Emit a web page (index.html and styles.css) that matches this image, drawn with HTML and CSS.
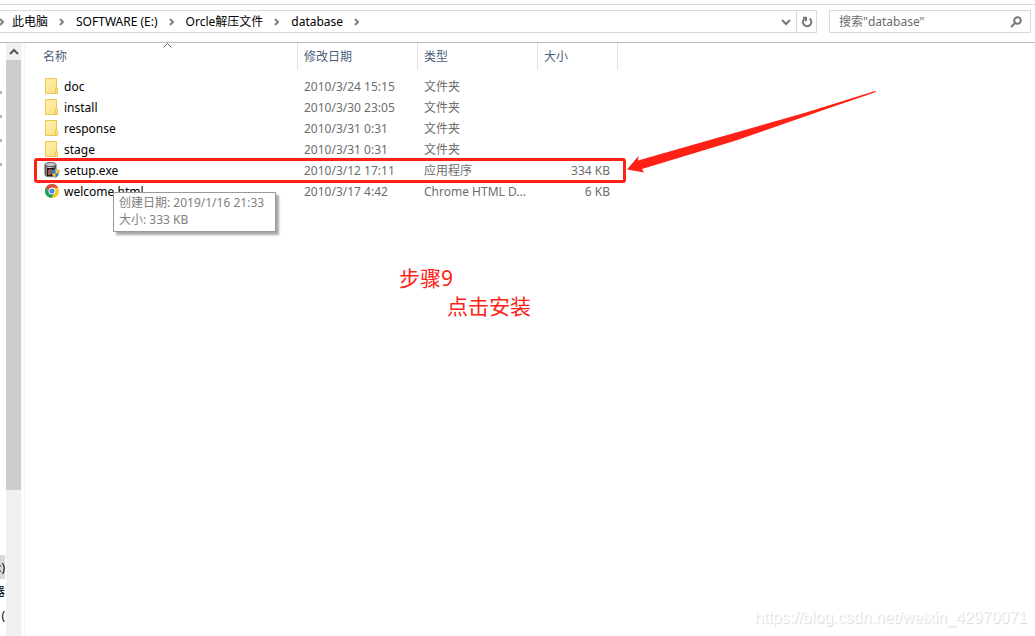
FILE: index.html
```
<!DOCTYPE html>
<html lang="zh-CN">
<head>
<meta charset="utf-8">
<title>database</title>
<link rel="stylesheet" href="styles.css">
</head>
<body>
<div class="explorer">
  <header class="toolbar">
    <nav class="address" aria-label="地址">
      <svg class="sep first" viewBox="0 0 6 8"><path d="M1 1l3 3-3 3"/></svg>
      <ol class="crumbs">
        <li><a href="#">此电脑</a><svg class="sep" viewBox="0 0 6 8"><path d="M1 1l3 3-3 3"/></svg></li>
        <li><a href="#">SOFTWARE (E:)</a><svg class="sep" viewBox="0 0 6 8"><path d="M1 1l3 3-3 3"/></svg></li>
        <li><a href="#">Orcle解压文件</a><svg class="sep" viewBox="0 0 6 8"><path d="M1 1l3 3-3 3"/></svg></li>
        <li><a href="#">database</a><svg class="sep" viewBox="0 0 6 8"><path d="M1 1l3 3-3 3"/></svg></li>
      </ol>
      <button class="history" type="button" aria-label="以前的位置"><svg width="10" height="8" viewBox="0 0 10 8"><path d="M1 2l4 4 4-4"/></svg></button>
      <button class="refresh" type="button" aria-label="刷新"><svg width="12" height="12" viewBox="0 0 12 12"><path d="M8.500 2.500A4.200 4.200 0 1 1 3.300 2.900M2 1.700h3v3.500"/></svg></button>
    </nav>
    <form class="search">
      <input type="text" aria-label="搜索" placeholder='搜索"database"'>
      <button type="button" aria-label="开始搜索"><svg width="12" height="12" viewBox="0 0 12 12"><circle cx="7.500" cy="4.500" r="3.300"/><path d="M5 7L1 11"/></svg></button>
    </form>
  </header>
  <div class="content">
    <aside class="tree">
      <i class="pin"></i><i class="pin"></i><i class="pin"></i><i class="pin"></i>
      <div class="drives">
        <span class="drive current">:)</span>
        <span class="drive">器</span>
        <span class="drive">(</span>
      </div>
    </aside>
    <div class="scrollbar">
      <button type="button" aria-label="向上滚动"><svg width="10" height="8" viewBox="0 0 10 8"><path d="M1 6l4-4 4 4"/></svg></button>
      <div class="thumb"></div>
    </div>
    <main class="files">
      <table>
        <colgroup><col class="c-name"><col class="c-date"><col class="c-type"><col class="c-size"></colgroup>
        <thead>
          <tr>
            <th scope="col">名称<svg class="sort" width="9" height="5" viewBox="0 0 9 5"><path d="M.5 4.500l4-4 4 4"/></svg></th>
            <th scope="col">修改日期</th><th scope="col">类型</th><th scope="col">大小</th>
          </tr>
        </thead>
        <tbody>
          <tr><td><div class="name"><svg class="icon" viewBox="0 0 16 16"><use href="#folder"/></svg>doc</div></td><td>2010/3/24 15:15</td><td>文件夹</td><td></td></tr>
          <tr><td><div class="name"><svg class="icon" viewBox="0 0 16 16"><use href="#folder"/></svg>install</div></td><td>2010/3/30 23:05</td><td>文件夹</td><td></td></tr>
          <tr><td><div class="name"><svg class="icon" viewBox="0 0 16 16"><use href="#folder"/></svg>response</div></td><td>2010/3/31 0:31</td><td>文件夹</td><td></td></tr>
          <tr><td><div class="name"><svg class="icon" viewBox="0 0 16 16"><use href="#folder"/></svg>stage</div></td><td>2010/3/31 0:31</td><td>文件夹</td><td></td></tr>
          <tr><td><div class="name"><svg class="icon" viewBox="0 0 16 16"><use href="#setup"/></svg>setup.exe</div></td><td>2010/3/12 17:11</td><td>应用程序</td><td>334 KB</td></tr>
          <tr><td><div class="name"><svg class="icon" viewBox="0 0 16 16"><use href="#chrome"/></svg>welcome.html</div></td><td>2010/3/17 4:42</td><td>Chrome HTML D...</td><td>6 KB</td></tr>
        </tbody>
      </table>
      <div class="tooltip" role="tooltip">创建日期: 2019/1/16 21:33<br>大小: 333 KB</div>
      <div class="mark-box"></div>
      <svg class="mark-arrow" width="250" height="84" viewBox="0 0 250 84"><path d="M1 78.500L12.500 65 12 69.500 110 41.500 180 21.500 249 0 250 1 196 19.500 110 49.500 16 78 18 81.500z"/></svg>
      <p class="note step">步骤9</p>
      <p class="note action">点击安装</p>
    </main>
  </div>
  <div class="watermark">https://blog.csdn.net/weixin_42970071</div>
</div>
<svg class="defs" aria-hidden="true">
  <defs>
    <linearGradient id="paper" x2="1" y2="1"><stop offset="0" stop-color="#fff0b0"/><stop offset="1" stop-color="#fbdc82"/></linearGradient>
    <linearGradient id="metal"><stop offset="0" stop-color="#555"/><stop offset=".4" stop-color="#ddd"/><stop offset="1" stop-color="#444"/></linearGradient>
    <symbol id="folder" viewBox="0 0 16 16"><path d="M1.500.5h11v10h1v5h-12z" fill="url(#paper)" stroke="#ebc84f"/><path d="M11.500 15v-4.500h1" fill="none" stroke="#ebc84f"/></symbol>
    <symbol id="setup" viewBox="0 0 16 16">
      <path d="M1 2.500v10c0 3 11 3 11 0v-10z" fill="url(#metal)" stroke="#555"/>
      <ellipse cx="6.500" cy="2.500" rx="5.500" ry="2" fill="#ccc" stroke="#555"/>
      <path d="M3 6h8v8H3z" fill="#301010"/><path d="M4 12h3M5 12V8h3M8 9l2 1M5 10h3M8 12h2" fill="none" stroke="#ef9088"/>
      <path d="M7 8q2.500 0 4.500-1.500Q13.500 8 15.500 8q0 5-4 8-4.500-3-4.500-8" fill="#2d78c8"/>
      <path d="M11.500 6.500Q13.500 8 15.500 8q0 2-.7 3.500h-3.300zM7.700 11.500h3.800V16Q9 14.500 7.700 11.500" fill="#f8c52c"/>
    </symbol>
    <symbol id="chrome" viewBox="0 0 16 16">
      <circle cx="8" cy="8" r="7" fill="#fbc918"/>
      <path d="M2 4.300A7 7 0 0 1 14.200 4.800H8L5.200 9.500z" fill="#df4937"/>
      <path d="M2 4.300A7 7 0 0 0 7.300 15l3.500-5.400-5.600.2z" fill="#1da160"/>
      <circle cx="8" cy="8" r="3.500" fill="#fff"/><circle cx="8" cy="8" r="2.600" fill="#4a8af0"/>
    </symbol>
  </defs>
</svg>
</body>
</html>
```
FILE: styles.css
```
* { box-sizing: border-box; }
body {
  margin: 0;
  background: #fff;
  color: #000;
  font: 12px/21px "Noto Sans", "Noto Sans CJK SC", sans-serif;
}
button { margin: 0; padding: 0; border: 0; background: none; display: flex; align-items: center; justify-content: center; }
svg { fill: none; stroke-width: 1; flex: none; }
.defs { position: absolute; width: 0; height: 0; }
.explorer { position: relative; display: flex; flex-direction: column; min-height: 100vh; overflow: hidden; }

.toolbar {
  display: flex;
  gap: 12px;
  margin-top: 4px;
  padding: 5px 4px 9px 0;
  border-top: 1px solid #d9d9d9;
  border-bottom: 1px solid #bdbdbd;
}
.address { flex: 1; display: flex; height: 23px; border: 1px solid #d9d9d9; border-left: 0; align-items: stretch; }
.crumbs { flex: 1; display: flex; margin: 0; padding: 0 0 0 7px; list-style: none; }
.crumbs li { display: flex; align-items: center; }
.crumbs a { color: inherit; text-decoration: none; }
.sep { width: 6px; height: 8px; margin: 0 11px; stroke: #808080; stroke-width: 2; }
.sep.first { margin: 7px 0 0 -1px; }
.history, .refresh { width: 20px; stroke: #777; }
.history svg { stroke-width: 2; }
.refresh { border-left: 1px solid #d9d9d9; }
.refresh svg { stroke-width: 2; }
.search { display: flex; width: 202px; height: 23px; border: 1px solid #d9d9d9; }
.search input { flex: 1; min-width: 0; padding: 0 0 0 9px; border: 0; outline: 0; background: none; font: inherit; }
.search input::placeholder { color: #6d6d6d; opacity: 1; }
.search button { width: 28px; stroke: #777; }
.search svg { stroke-width: 2; }

.content { flex: 1; display: flex; }
.tree { display: flex; flex-direction: column; width: 6px; overflow: hidden; gap: 21px; padding-top: 48px; }
.pin { width: 2px; height: 3px; flex: none; background: #a9b4bd; }
.drives { margin-top: auto; padding-bottom: 9px; }
.drive { display: flex; width: 5px; height: 24px; align-items: center; justify-content: flex-end; }
.drive.current { background: #d9d9d9; }
.scrollbar { width: 16px; background: #f0f0f0; border-right: 1px solid #f7f7f7; }
.scrollbar button { width: 15px; height: 17px; stroke: #555; }
.scrollbar button svg { stroke-width: 2; }
.thumb { width: 15px; height: 430px; background: #cdcdcd; }

.files { position: relative; flex: 1; margin-left: 2px; border-left: 1px solid #f3f3f3; }
table { width: 584px; margin-left: 9px; border-collapse: separate; border-spacing: 0; table-layout: fixed; }
.c-name { width: 264px; }
.c-date, .c-type { width: 120px; }
.c-size { width: 80px; }
th { position: relative; height: 27px; padding: 0 0 0 6px; border-right: 1px solid #e2e2e2; color: #4c607a; font-weight: 400; text-align: left; }
th:first-child { padding-left: 9px; }
.sort { position: absolute; top: 0; left: 129px; stroke: #666; }
tbody::before { content: ""; display: block; height: 6px; }
td { height: 21px; padding: 0 0 0 6px; color: #6d6d6d; white-space: nowrap; }
td:first-child { padding-left: 10px; color: #000; }
td:last-child { padding-right: 8px; text-align: right; }
.name { display: flex; align-items: flex-start; gap: 4px; }
.icon { width: 16px; height: 16px; margin-top: 2px; }

.tooltip {
  position: absolute;
  left: 88px;
  top: 149px;
  width: 163px;
  padding: 1px 5px 3px;
  border: 1px solid #999;
  background: #fff;
  box-shadow: 3px 3px 2px #aaa;
  color: #808080;
  line-height: 17px;
  white-space: nowrap;
}
.mark-box { position: absolute; left: 9px; top: 115px; width: 592px; height: 25px; border: 3px solid #ff2116; border-radius: 3px; }
.mark-arrow { position: absolute; left: 601px; top: 48px; fill: #ff2116; }
.note { position: absolute; margin: 0; color: #ff2116; font-size: 21px; line-height: 28px; }
.step { left: 374px; top: 221px; }
.action { left: 422px; top: 249px; }
.watermark {
  position: absolute;
  right: 8px;
  bottom: 8px;
  color: #fff;
  font: 16px/20px "Liberation Sans", sans-serif;
  text-shadow: 1px 1px 1px #d6d6d6;
}
```
